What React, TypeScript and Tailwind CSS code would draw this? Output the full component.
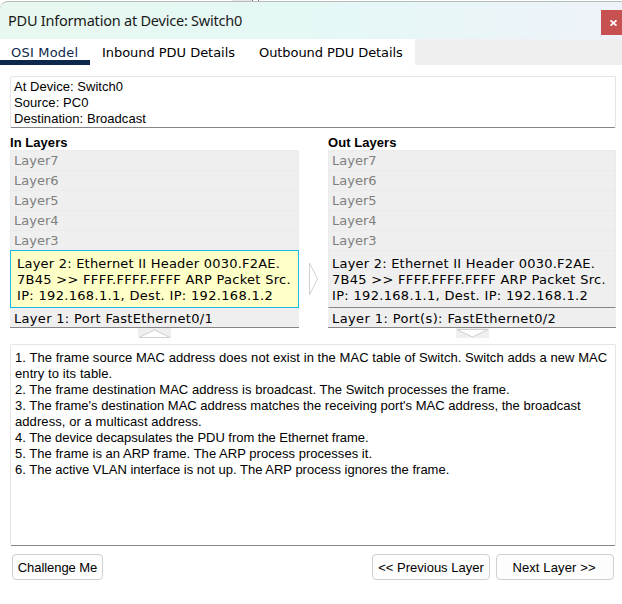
import type { ReactNode } from "react";

const verdana = "font-['Verdana','DejaVu_Sans',sans-serif]";

function Line({ children, className = "" }: { children: ReactNode; className?: string }) {
  return (
    <div className="h-4 leading-4">
      <span className={`whitespace-pre ${className}`}>{children}</span>
    </div>
  );
}

function EmptyLayer({ name }: { name: string }) {
  return (
    <div className="h-5 border border-b-0 border-[#ebebeb] pl-[3px] leading-[19px] text-[#808080]">
      <span>{name}</span>
    </div>
  );
}

const upper = ["Layer7", "Layer6", "Layer5", "Layer4", "Layer3"];

function FrameSummary() {
  return (
    <>
      <Line className="tracking-[0.22px]">Layer 2: Ethernet II Header 0030.F2AE.</Line>
      <Line className="tracking-[0.29px]">{"7B45 >> FFFF.FFFF.FFFF ARP Packet Src."}</Line>
      <Line className="tracking-[0.32px]">IP: 192.168.1.1, Dest. IP: 192.168.1.2</Line>
    </>
  );
}

export default function App() {
  return (
    <div className="flex h-[604px] w-[622px] flex-col overflow-hidden bg-white font-['Liberation_Sans',Arial,sans-serif] text-[13px] text-black">
      <div className="flex h-px justify-start bg-white pl-[232px]">
        <div className="h-px w-5 bg-[#e5e5e5]" />
        <div className="h-px w-[7px] border-x border-[#777]" />
      </div>
      <header className="flex h-[38px] shrink-0 items-start justify-between rounded-tl-lg border-t border-[#b4bdb9] bg-linear-to-r from-[#e8f8ef] via-[#e4f8f6] via-50% to-[#eef2f9] pl-2">
        <h1 className="mt-[8px] font-['Noto_Sans',sans-serif] text-[14.5px] leading-5 text-[#1a1a1a]">
          <span className="whitespace-pre tracking-[-0.22px]">PDU Information at Device: Switch0</span>
        </h1>
        <button className="mt-2 flex h-[25px] w-[21px] items-center justify-center bg-[#c75050]">
          <svg width="7" height="6" viewBox="0 0 7 6" className="ml-1" stroke="#fff" strokeWidth="1.7">
            <path d="M.5 .3L6.5 5.7M6.5 .3L.5 5.7" />
          </svg>
        </button>
      </header>
      <nav className={`flex h-[26px] shrink-0 bg-[#efefef] text-[13px] leading-[27px] ${verdana}`}>
        <div className="w-[90px] border-b-[5px] border-[#0d274d] bg-white pl-[11px] text-[#0d274d]">
          <span className="whitespace-pre tracking-[0.2px]">OSI Model</span>
        </div>
        <div className="w-[157px] bg-white pl-3">
          <span className="whitespace-pre tracking-[-0.04px]">Inbound PDU Details</span>
        </div>
        <div className="w-[168px] bg-white pl-3">
          <span className="whitespace-pre tracking-[-0.07px]">Outbound PDU Details</span>
        </div>
      </nav>
      <main className="flex flex-1 flex-col pt-[11px] pr-1.5 pl-2.5">
        <section className="h-[52px] shrink-0 rounded-[2px] border border-[#e5e5e5] border-b-[#868686] pt-[2px] pl-[3px]">
          <Line className="tracking-[0.04px]">At Device: Switch0</Line>
          <Line className="tracking-[0.08px]">Source: PC0</Line>
          <Line className="tracking-[0.05px]">Destination: Broadcast</Line>
        </section>
        <div className="mt-[7px] flex h-[203px]">
          <section className="w-[289px]">
            <h2 className="h-[15px] font-bold leading-[15px]">
              <span className="tracking-[0.05px]">In Layers</span>
            </h2>
            <div className={`bg-[#efefef] text-[13px] ${verdana}`}>
              {upper.map((n) => (
                <EmptyLayer key={n} name={n} />
              ))}
              <div className="h-[58px] border border-[#1cb8e6] bg-[#ffffc8] pt-[5px] pl-[6px]">
                <FrameSummary />
              </div>
              <div className="h-5 border-b border-[#868686] pl-1 leading-[22px]">
                <span className="whitespace-pre tracking-[0.31px]">Layer 1: Port FastEthernet0/1</span>
              </div>
            </div>
            <svg width="33" height="10" viewBox="0 0 33 10" className="ml-32 block">
              <path d="M0 0H33V10H0Z" fill="#efefef" />
              <path d="M1 9.5L16.5 2L32 9.5Z" fill="#fff" stroke="#d0d0d0" />
            </svg>
          </section>
          <div className="flex w-[29px] justify-center pt-[127px]">
            <svg width="10" height="34" viewBox="0 0 10 34" fill="#fff" stroke="#d0d0d0">
              <path d="M.5 1L8.5 17L.5 33Z" />
            </svg>
          </div>
          <section className="w-[288px]">
            <h2 className="h-[15px] font-bold leading-[15px]">
              <span className="tracking-[0.05px]">Out Layers</span>
            </h2>
            <div className={`bg-[#efefef] text-[13px] ${verdana}`}>
              {upper.map((n) => (
                <EmptyLayer key={n} name={n} />
              ))}
              <div className="h-[58px] border border-[#ebebeb] border-b-[#868686] pt-[5px] pl-[3px]">
                <FrameSummary />
              </div>
              <div className="h-5 border-b border-[#868686] pl-1 leading-[22px]">
                <span className="whitespace-pre tracking-[0.39px]">Layer 1: Port(s): FastEthernet0/2</span>
              </div>
            </div>
            <svg width="33" height="10" viewBox="0 0 33 10" className="ml-32 block">
              <path d="M0 0H33V10H0Z" fill="#efefef" />
              <path d="M1 1.5L16.5 9L32 1.5Z" fill="#fff" stroke="#d0d0d0" />
            </svg>
          </section>
        </div>
        <section className="mt-[6px] h-[202px] shrink-0 rounded-[2px] border border-[#e5e5e5] border-b-[#868686] pt-[5px] pl-[4px]">
          <Line className="tracking-[0.06px]">1. The frame source MAC address does not exist in the MAC table of Switch. Switch adds a new MAC</Line>
          <Line className="tracking-[0.1px]">entry to its table.</Line>
          <Line className="tracking-[0.03px]">2. The frame destination MAC address is broadcast. The Switch processes the frame.</Line>
          <Line className="tracking-[0.01px]">3. The frame's destination MAC address matches the receiving port's MAC address, the broadcast</Line>
          <Line className="tracking-[0.08px]">address, or a multicast address.</Line>
          <Line className="tracking-[-0.03px]">4. The device decapsulates the PDU from the Ethernet frame.</Line>
          <Line className="tracking-[0.03px]">5. The frame is an ARP frame. The ARP process processes it.</Line>
          <Line>6. The active VLAN interface is not up. The ARP process ignores the frame.</Line>
        </section>
        <footer className="mt-2 flex h-[26px] pl-0.5">
          <button className="w-[91px] rounded border border-[#d0d0d0] bg-[#fdfdfd] pt-px leading-[23px]">
            <span className="whitespace-pre tracking-[-0.05px]">Challenge Me</span>
          </button>
          <button className="ml-[269px] w-[118px] rounded border border-[#d0d0d0] bg-[#fdfdfd] pt-px leading-[23px]">
            <span className="whitespace-pre">{"<< Previous Layer"}</span>
          </button>
          <button className="ml-1.5 w-[118px] rounded border border-[#d0d0d0] bg-[#fdfdfd] pt-px pr-0.5 leading-[23px]">
            <span className="whitespace-pre tracking-[0.12px]">{"Next Layer >>"}</span>
          </button>
        </footer>
      </main>
    </div>
  );
}
